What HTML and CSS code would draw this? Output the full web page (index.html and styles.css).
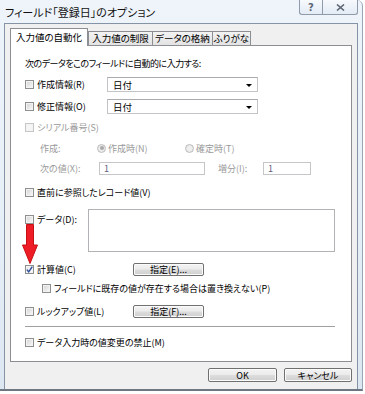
FILE: index.html
```html
<!DOCTYPE html>
<html lang="ja">
<head>
<meta charset="utf-8">
<title>フィールド「登録日」のオプション</title>
<link rel="stylesheet" href="styles.css">
</head>
<body>
<div class="frame">
  <div class="titlebar">
    <div class="title">フィールド「登録日」のオプション</div>
    <div class="caps">
      <div class="cap cap-help">?</div>
      <div class="cap cap-close">
        <svg width="9" height="7" viewBox="0 0 9 7"><path d="M1 0.5 L8 6.5 M8 0.5 L1 6.5" stroke="#5d6675" stroke-width="1.6" fill="none"/></svg>
      </div>
    </div>
  </div>
  <div class="client">
    <div class="tabs">
      <div class="tab tab-active">入力値の自動化</div>
      <div class="tab tab-2">入力値の制限</div>
      <div class="tab tab-3">データの格納</div>
      <div class="tab tab-4">ふりがな</div>
    </div>
    <div class="panel">
      <div class="row r-head">次のデータをこのフィールドに自動的に入力する:</div>
      <div class="row r-combo1">
        <div class="cbl w-combo"><span class="cb"></span><span>作成情報(R)</span></div>
        <div class="combo">日付<span class="arrow"></span></div>
      </div>
      <div class="row r-combo2">
        <div class="cbl w-combo"><span class="cb"></span><span>修正情報(O)</span></div>
        <div class="combo">日付<span class="arrow"></span></div>
      </div>
      <div class="row r-serial dis">
        <div class="cbl"><span class="cb cb-dis"></span><span>シリアル番号(S)</span></div>
      </div>
      <div class="row r-make dis">
        <span class="w-make">作成:</span>
        <div class="radio w-radio1"><span class="rd rd-on"></span><span>作成時(N)</span></div>
        <div class="radio"><span class="rd"></span><span>確定時(T)</span></div>
      </div>
      <div class="row r-next dis">
        <span class="w-next">次の値(X):</span>
        <div class="tbox tbox1">1</div>
        <span class="w-inc">増分(I):</span>
        <div class="tbox tbox2">1</div>
      </div>
      <div class="row r-prev">
        <div class="cbl"><span class="cb"></span><span>直前に参照したレコード値(V)</span></div>
      </div>
      <div class="row r-data">
        <div class="cbl w-data"><span class="cb"></span><span>データ(D):</span></div>
        <div class="tarea"></div>
      </div>
      <div class="row r-calc">
        <div class="cbl w-btn"><span class="cb cb-on"><svg width="7" height="7" viewBox="0 0 7 7"><path d="M0.8 3.6 L2.7 5.8 L6.3 0.6" stroke="#2c4e9c" stroke-width="1.4" fill="none"/></svg></span><span>計算値(C)</span></div>
        <div class="btn btn-spec">指定(E)...</div>
      </div>
      <div class="row r-keep">
        <div class="cbl"><span class="cb"></span><span>フィールドに既存の値が存在する場合は置き換えない(P)</span></div>
      </div>
      <div class="row r-look">
        <div class="cbl w-btn"><span class="cb"></span><span>ルックアップ値(L)</span></div>
        <div class="btn btn-spec">指定(F)...</div>
      </div>
      <div class="sep"></div>
      <div class="row r-lock">
        <div class="cbl"><span class="cb"></span><span>データ入力時の値変更の禁止(M)</span></div>
      </div>
    </div>
    <div class="buttons">
      <div class="btn btn-ok">OK</div>
      <div class="btn btn-cancel">キャンセル</div>
    </div>
  </div>
  <svg class="red-arrow" width="16" height="40" viewBox="0 0 16 40">
    <polygon points="4.5,0.5 11.5,0.5 11.5,21 15.5,21 8,39.5 0.5,21 4.5,21" fill="#ee1c24" stroke="#c80f16" stroke-width="1"/>
  </svg>
</div>
</body>
</html>
```

FILE: styles.css
```css
html, body {
  margin: 0;
  padding: 0;
  background: #ffffff;
}

body {
  width: 365px;
  height: 394px;
  overflow: hidden;
  font-family: "Noto Sans CJK JP", "Noto Sans", sans-serif;
  font-size: 9px;
  color: #000;
  font-feature-settings: "palt";
}

.frame {
  position: relative;
  width: 363px;
  height: 391px;
  box-sizing: border-box;
  background: linear-gradient(180deg, #eef4fa 0%, #e6eef7 60%, #dde7f2 100%);
  border-right: 1px solid #9aa6b4;
  border-bottom: 2px solid #6e7682;
  border-top-right-radius: 6px;
  padding: 0 4px 0 4px;
  display: flex;
  flex-direction: column;
}

.titlebar {
  height: 23px;
  display: flex;
  align-items: flex-start;
  justify-content: space-between;
}

.title {
  font-size: 11px;
  line-height: 24px;
  padding-left: 1px;
  color: #111;
}

.caps {
  display: flex;
}

.cap {
  height: 15px;
  border: 1px solid #8f9aab;
  border-top: none;
  background: linear-gradient(180deg, rgba(255,255,255,0.5), rgba(220,230,242,0.6));
  display: flex;
  align-items: center;
  justify-content: center;
  box-sizing: border-box;
}

.cap-help {
  width: 23px;
  border-bottom-left-radius: 3px;
  border-right: none;
  font-family: "DejaVu Sans", sans-serif;
  font-size: 10px;
  font-weight: bold;
  color: #5d6675;
}

.cap-close {
  width: 36px;
  border-bottom-right-radius: 3px;
}

.client {
  flex: 1;
  background: #f0f0f0;
  border: 1px solid #8494a6;
  border-bottom: none;
  display: flex;
  flex-direction: column;
  padding: 4px 5px 0 5px;
}

.tabs {
  display: flex;
  align-items: flex-end;
  height: 17px;
  position: relative;
  z-index: 2;
}

.tab {
  height: 14px;
  box-sizing: border-box;
  border: 1px solid #8c8e94;
  border-bottom: none;
  background: linear-gradient(180deg, #f3f3f3, #e3e3e3);
  display: flex;
  align-items: center;
  justify-content: center;
  line-height: 1;
  margin-left: -1px;
}

.tab-active {
  height: 18px;
  margin-left: 0;
  margin-bottom: -1px;
  background: #ffffff;
  width: 78px;
  font-size: 9.5px;
  z-index: 3;
}

.tab-2 { width: 65px; margin-left: 0; font-size: 9.5px; }
.tab-3 { width: 61px; font-size: 9.5px; }
.tab-4 { width: 39px; font-size: 9.5px; }

.panel {
  height: 315px;
  background: #ffffff;
  border: 1px solid #8c8e94;
  display: flex;
  flex-direction: column;
  padding-left: 14px;
}

.row {
  display: flex;
  align-items: center;
  height: 14px;
  white-space: nowrap;
}

.dis { color: #9a9a9a; }

.cbl {
  display: flex;
  align-items: center;
  gap: 3px;
}

.cb {
  width: 9px;
  height: 9px;
  box-sizing: border-box;
  border: 1px solid #8e8f8f;
  background: linear-gradient(135deg, #d2d2d2 0%, #e8e8e8 55%, #fbfbfb 100%);
  box-shadow: inset 0 0 0 1px #f3f3f3;
  display: inline-flex;
  align-items: center;
  justify-content: center;
  flex: none;
}

.cb-dis {
  border-color: #c6c6c6;
  background: #f5f5f5;
}

.cb-on {
  background: linear-gradient(135deg, #e6e6e6, #fdfdfd);
}

.r-head { margin-top: 10px; letter-spacing: -0.5px; }
.r-combo1 { margin-top: 7px; height: 15px; }
.r-combo2 { margin-top: 7px; height: 15px; }
.r-serial { margin-top: 6px; }
.r-make { margin-top: 7px; padding-left: 15px; }
.r-next { margin-top: 7px; height: 13px; padding-left: 15px; }
.r-prev { margin-top: 10px; }
.r-data { margin-top: 10px; height: 43px; align-items: flex-start; }
.r-calc { margin-top: 11px; height: 13px; }
.r-keep { margin-top: 5px; padding-left: 17px; }
.r-look { margin-top: 10px; height: 13px; }
.r-lock { margin-top: 8px; }

.w-combo { width: 82px; }
.w-data { width: 63px; margin-top: 4px; }
.w-btn { width: 108px; }

.combo {
  position: relative;
  width: 151px;
  height: 15px;
  box-sizing: border-box;
  border: 1px solid #c2c4c8;
  border-top-color: #a9abb0;
  background: #fff;
  padding-left: 5px;
  display: flex;
  align-items: center;
  font-size: 9.5px;
}

.arrow {
  position: absolute;
  right: 5px;
  top: 6px;
  width: 0;
  height: 0;
  border-left: 3px solid transparent;
  border-right: 3px solid transparent;
  border-top: 3px solid #000;
}

.w-make { width: 57px; }
.w-radio1 { width: 88px; }

.radio {
  display: flex;
  align-items: center;
  gap: 2px;
}

.rd {
  width: 9px;
  height: 9px;
  box-sizing: border-box;
  border-radius: 50%;
  border: 1px solid #bcbcbc;
  background: radial-gradient(circle, #f2f2f2 0%, #e6e6e6 100%);
  position: relative;
  flex: none;
}

.rd-on::after {
  content: "";
  position: absolute;
  left: 1.5px;
  top: 1.5px;
  width: 4px;
  height: 4px;
  border-radius: 50%;
  background: #a9a9a9;
}

.w-next { width: 59px; }
.w-inc { width: 45px; margin-left: 13px; }

.tbox {
  height: 13px;
  box-sizing: border-box;
  border: 1px solid #c4c6ca;
  background: #fff;
  color: #5e6080;
  padding-left: 4px;
  display: flex;
  align-items: center;
}

.tbox1 { width: 106px; }
.tbox2 { width: 48px; }

.tarea {
  width: 247px;
  height: 43px;
  box-sizing: border-box;
  border: 1px solid #b0b2b6;
  background: #fff;
}

.btn {
  box-sizing: border-box;
  border: 1px solid #707070;
  border-radius: 2px;
  background: linear-gradient(180deg, #f3f3f3 0%, #ebebeb 48%, #dddddd 52%, #cfcfcf 100%);
  box-shadow: inset 0 0 0 1px #fbfbfb;
  display: flex;
  align-items: center;
  justify-content: center;
  line-height: 1;
}

.btn-spec {
  width: 71px;
  height: 13px;
}

.sep {
  margin-top: 8px;
  width: 310px;
  height: 1px;
  background: #a0a0a0;
}

.buttons {
  display: flex;
  justify-content: flex-end;
  gap: 7px;
  margin-top: 6px;
}

.btn-ok { width: 69px; height: 14px; }
.btn-cancel { width: 68px; height: 14px; }

.red-arrow {
  position: absolute;
  left: 22px;
  top: 224px;
}
```
